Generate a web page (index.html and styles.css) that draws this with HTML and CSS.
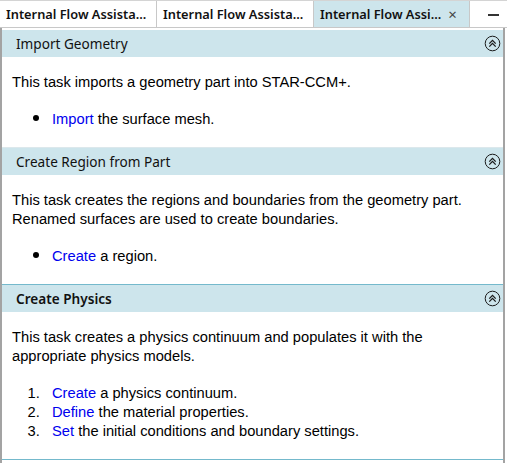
FILE: index.html
```html
<!DOCTYPE html>
<html>
<head>
<meta charset="utf-8">
<link rel="stylesheet" href="styles.css">
</head>
<body>
<div class="window">
  <div class="tabbar">
    <div class="tab">Internal Flow Assista...</div>
    <div class="tab">Internal Flow Assista...</div>
    <div class="tab active"><span class="tabtext">Internal Flow Assi...</span><span class="close">&#215;</span></div>
    <div class="minbox"><span class="minimize"></span></div>
  </div>
  <div class="panel">
    <div class="section">
      <div class="header"><span class="title">Import Geometry</span>
        <svg class="collapse" width="17" height="17" viewBox="0 0 17 17"><circle cx="8.5" cy="8.5" r="7.3" fill="none" stroke="#1a1a1a" stroke-width="1"/><path d="M5.3 8.6 L8.5 5.4 L11.7 8.6 M5.3 11.6 L8.5 8.4 L11.7 11.6" fill="none" stroke="#1a1a1a" stroke-width="1.3"/></svg>
      </div>
      <div class="body">
        <p>This task imports a geometry part into STAR-CCM+.</p>
        <ul><li><a>Import</a> the surface mesh.</li></ul>
      </div>
    </div>
    <div class="section">
      <div class="header"><span class="title">Create Region from Part</span>
        <svg class="collapse" width="17" height="17" viewBox="0 0 17 17"><circle cx="8.5" cy="8.5" r="7.3" fill="none" stroke="#1a1a1a" stroke-width="1"/><path d="M5.3 8.6 L8.5 5.4 L11.7 8.6 M5.3 11.6 L8.5 8.4 L11.7 11.6" fill="none" stroke="#1a1a1a" stroke-width="1.3"/></svg>
      </div>
      <div class="body">
        <p>This task creates the regions and boundaries from the geometry part. Renamed surfaces are used to create boundaries.</p>
        <ul><li><a>Create</a> a region.</li></ul>
      </div>
    </div>
    <div class="section selected">
      <div class="header"><span class="title bold">Create Physics</span>
        <svg class="collapse" width="17" height="17" viewBox="0 0 17 17"><circle cx="8.5" cy="8.5" r="7.3" fill="none" stroke="#1a1a1a" stroke-width="1"/><path d="M5.3 8.6 L8.5 5.4 L11.7 8.6 M5.3 11.6 L8.5 8.4 L11.7 11.6" fill="none" stroke="#1a1a1a" stroke-width="1.3"/></svg>
      </div>
      <div class="body">
        <p>This task creates a physics continuum and populates it with the appropriate physics models.</p>
        <ol>
          <li><a>Create</a> a physics continuum.</li>
          <li><a>Define</a> the material properties.</li>
          <li><a>Set</a> the initial conditions and boundary settings.</li>
        </ol>
      </div>
    </div>
  </div>
</div>
</body>
</html>
```

FILE: styles.css
```css
html, body {
  margin: 0;
  padding: 0;
  background: #ffffff;
}
.window {
  width: 507px;
  height: 463px;
  overflow: hidden;
  display: flex;
  flex-direction: column;
}
.tabbar {
  display: flex;
  height: 28px;
  border-top: 1px solid #d4d4d4;
  border-bottom: 1px solid #c8c8c8;
  box-sizing: border-box;
  background: #ffffff;
}
.tab {
  width: 157px;
  flex: none;
  box-sizing: border-box;
  border-right: 1px solid #c8c8c8;
  padding-left: 6px;
  font-family: "Noto Sans", sans-serif;
  font-weight: 600;
  font-size: 12.8px;
  line-height: 26px;
  color: #111111;
  white-space: nowrap;
  overflow: hidden;
}
.tab.active {
  width: 156px;
  background: #cde5ec;
  display: flex;
  align-items: center;
}
.tabtext {
  flex: none;
}
.close {
  flex: none;
  font-weight: 400;
  font-size: 15px;
  color: #444444;
  margin-left: 7px;
}
.minbox {
  flex: 1;
  display: flex;
  align-items: center;
  justify-content: center;
  padding-left: 10px;
}
.minimize {
  display: block;
  width: 11px;
  height: 2px;
  background: #333333;
  margin-top: 2px;
}
.panel {
  flex: 1;
  margin-right: 2px;
  border-left: 2px solid #a3a3a3;
  border-right: 2px solid #a3a3a3;
  padding-top: 2px;
  background: #ffffff;
}
.section {
  border-top: 1px solid #dce8ec;
}
.section:first-child {
  border-top: none;
}
.section.selected {
  border-top: 1px solid #74b9cc;
  border-bottom: 1px solid #74b9cc;
}
.header {
  height: 27px;
  background: #cde5ec;
  display: flex;
  align-items: center;
  justify-content: space-between;
  padding: 0 2px 0 14px;
}
.title {
  font-family: "Noto Sans", sans-serif;
  font-size: 13.6px;
  color: #111111;
}
.title.bold {
  font-weight: 600;
}
.collapse {
  display: block;
}
.body {
  padding: 16px 8px 18px 10px;
  font-family: "Liberation Sans", Arial, sans-serif;
  font-size: 14.7px;
  line-height: 19px;
  color: #000000;
}
.body p {
  margin: 0 0 18px 0;
}
.body ul, .body ol {
  margin: 0;
  padding-left: 40px;
}
.body ul {
  list-style: none;
}
.body ul li::before {
  content: "";
  display: inline-block;
  width: 6px;
  height: 6px;
  border-radius: 50%;
  background: #000000;
  margin-left: -19px;
  margin-right: 13px;
  vertical-align: 3px;
}
.body ol li::marker {
  content: counter(list-item) ".\00a0\00a0\00a0";
}
.body a {
  color: #0000ee;
}
```
